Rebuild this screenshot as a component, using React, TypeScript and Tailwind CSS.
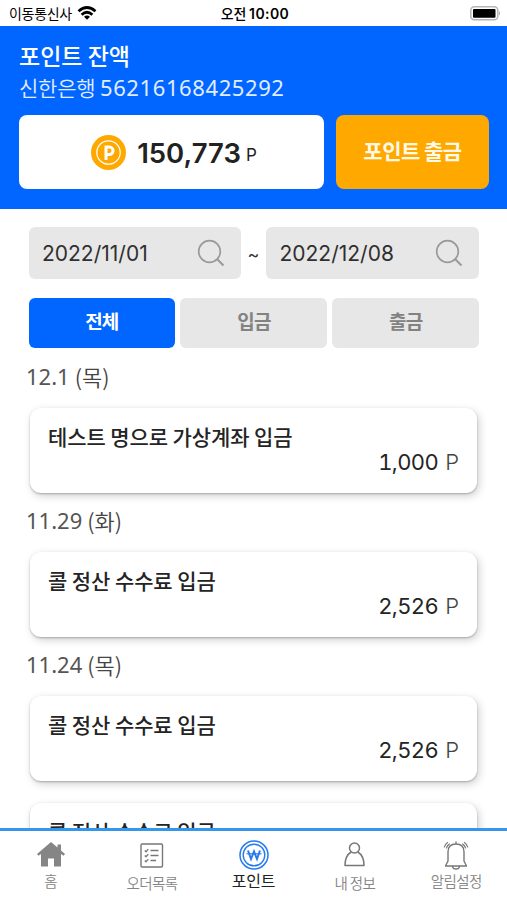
import type { ReactNode } from 'react';

const KR = "font-['Noto_Sans_CJK_KR',sans-serif]";
const LATIN = "font-['Inter','Noto_Sans_CJK_KR',sans-serif]";
const HUMANIST = "font-['Noto_Sans','Noto_Sans_CJK_KR',sans-serif]";

function StatusBar() {
  return (
    <header className={`${KR} grid h-[26px] shrink-0 grid-cols-3 items-center bg-white pr-[6px] pl-[9px] text-black`}>
      <div className="flex items-center gap-[5px]">
        <span className="text-[14px] leading-none tracking-[-0.3px]">이동통신사</span>
        <svg width="20" height="14" viewBox="0 0 20 14" fill="none" stroke="black" strokeWidth="2.7">
          <path d="M1.5 5.2 Q10 -2.2 18.5 5.2" />
          <path d="M4.6 8.7 Q10 3.8 15.4 8.7" />
          <path d="M7 10.7 Q10 8.2 13 10.7 L10 13.8Z" fill="black" stroke="none" />
        </svg>
      </div>
      <div className="text-center text-[14px] leading-none font-medium whitespace-nowrap">
        <span className="tracking-[-0.2px]">오전 </span>
        <span className="font-['Inter',sans-serif] text-[14px] font-semibold tracking-[0.4px]">10:00</span>
      </div>
      <svg className="justify-self-end" width="31" height="15" viewBox="0 0 31 15">
        <rect x="0.8" y="0.8" width="27" height="13" rx="3.5" fill="white" stroke="#b5b5b5" strokeWidth="1.5" />
        <rect x="3" y="3" width="22.5" height="8.8" rx="1" fill="black" />
        <path d="M29 5 Q31 7.3 29 9.8Z" fill="#aaa" />
      </svg>
    </header>
  );
}

function Balance() {
  return (
    <section className={`${KR} h-[183px] shrink-0 bg-[#0066ff] px-[19px] pt-[14px] text-white`}>
      <h1 className="h-[31px] text-[23px] leading-[31px] font-medium">포인트 잔액</h1>
      <p className="h-[32px] text-[21px] leading-[32px] font-[350] whitespace-nowrap text-[#e0edff]">
        <span className="tracking-[-0.2px]">신한은행 </span>
        <span className={`${HUMANIST} text-[22px] font-normal tracking-[0.6px]`}>56216168425292</span>
      </p>
      <div className="mt-3 grid h-[74px] grid-cols-[305px_153px] gap-3">
        <div className="flex items-center justify-center rounded-lg bg-white pl-[5px] text-[#222]">
          <svg width="35" height="35" viewBox="0 0 35 35">
            <circle cx="17.5" cy="17.5" r="17.5" fill="#ffa800" />
            <circle cx="17.5" cy="17.5" r="11.7" fill="none" stroke="white" strokeWidth="1.2" />
            <path d="M15 25 V12 H18.3 A3.7 3.7 0 0 1 18.3 19.5 H15" fill="none" stroke="white" strokeWidth="3" />
          </svg>
          <b className={`${LATIN} mt-[3px] ml-[11px] text-[27.5px] leading-none font-semibold`}>150,773</b>
          <span className={`${LATIN} mt-[6px] ml-[5px] text-[17px] leading-none`}>P</span>
        </div>
        <button className="rounded-lg bg-[#ffa800] pb-[4px] text-[21px] leading-none font-bold tracking-[-0.5px] text-[#fff9e8]">포인트 출금</button>
      </div>
    </section>
  );
}

function DateField({ value }: { value: string }) {
  return (
    <div className="flex h-[52px] items-center justify-between rounded-md bg-[#e7e7e7] pr-[16px] pl-[13.5px] text-[#303030]">
      <span className={`${LATIN} text-[21px] leading-none`}>{value}</span>
      <svg width="28" height="28" viewBox="0 0 28 28" fill="none" stroke="#999" strokeWidth="1.7">
        <circle cx="12.5" cy="12.5" r="10.8" />
        <path d="M20 20 L26.5 26.5" strokeWidth="2" />
      </svg>
    </div>
  );
}

function Filters() {
  return (
    <div className={`${KR} px-[28.5px] pt-[18px]`}>
      <div className="grid grid-cols-[212.5px_25px_212.5px]">
        <DateField value="2022/11/01" />
        <span className={`${LATIN} self-center pt-1 text-center text-[18px] leading-none text-[#333]`}>~</span>
        <DateField value="2022/12/08" />
      </div>
      <div className="mt-[19px] grid h-[50px] grid-cols-3 gap-[5px] text-[19px] leading-none font-bold tracking-[-0.8px]">
        <button className="rounded-md bg-[#0066ff] pb-[5px] text-white">전체</button>
        <button className="rounded-md bg-[#e7e7e7] pb-[5px] pl-px text-[#828282]">입금</button>
        <button className="rounded-md bg-[#e7e7e7] pb-[5px] pl-px text-[#828282]">출금</button>
      </div>
    </div>
  );
}

function Card({ title, amount }: { title: string; amount?: string }) {
  return (
    <div className="mx-[30px] h-[85px] shrink-0 rounded-[11px] bg-white px-[18px] pt-[13px] text-[#242424] shadow-[2px_3px_9px_rgba(0,0,0,0.19),0_1px_2px_rgba(0,0,0,0.24)]">
      <div className="h-[30px] text-[21px] leading-[30px] font-medium tracking-[-0.1px]">{title}</div>
      {amount && (
        <div className={`${LATIN} mt-[-2px] flex h-[26px] justify-end gap-[7px] text-[22px] leading-[26px]`}>
          <span className="tracking-[-0.6px] tabular-nums">{amount}</span>
          <span className="font-light text-[#444]">P</span>
        </div>
      )}
    </div>
  );
}

function Entry({ date, day, title, amount }: { date: string; day: string; title: string; amount: string }) {
  return (
    <section className="flex h-[144px] shrink-0 flex-col">
      <h2 className="flex h-[60px] shrink-0 gap-[5px] pl-[26px] text-[22px] leading-[56px] font-[350] text-[#444]">
        <span className={`${HUMANIST} font-normal text-[#555]`}>{date}</span>
        <span>({day})</span>
      </h2>
      <Card title={title} amount={amount} />
    </section>
  );
}

function NavItem({ label, active, raised, children }: { label: string; active?: boolean; raised?: boolean; children: ReactNode }) {
  return (
    <div className={active ? 'flex flex-col items-center text-[#222]' : 'flex flex-col items-center text-[#858585]'}>
      <div className="flex h-[39px] items-end justify-center">{children}</div>
      <span
        className={
          active
            ? 'text-[16px] leading-[21px] tracking-[-0.2px]'
            : raised
              ? 'text-[14.5px] leading-[21px] font-[350] tracking-[-0.6px]'
              : 'text-[14.5px] leading-[25px] font-[350] tracking-[-0.6px]'
        }
      >
        {label}
      </span>
    </div>
  );
}

function Navigation() {
  return (
    <nav className={`${KR} grid h-[72px] shrink-0 grid-cols-5 border-t-[3px] border-[#3497ea] bg-white`}>
      <NavItem label="홈" raised>
        <svg className="mb-[3px]" width="28" height="25" viewBox="0 0 28 25" fill="#858585">
          <path d="M14 0 L0 12 L1.4 13.7 L4 12 V24.5 H11 V16.5 H17 V24.5 H24 V12 L26.6 13.7 L28 12 L24 8.5 V2.5 H20.5 V5.6Z" />
        </svg>
      </NavItem>
      <NavItem label="오더목록">
        <svg className="mb-[2px]" width="24" height="25" viewBox="0 0 24 25" fill="none" stroke="#777" strokeWidth="1.4">
          <rect x="1" y="1" width="21.5" height="23" rx="1.2" />
          <path d="M4.8 7.5 L6 8.7 L8.3 6.1 M4.8 12.5 L6 13.7 L8.3 11.1 M4.8 17.5 L6 18.7 L8.3 16.1 M10.5 7.5 H18.5 M10.5 12.5 H18.5 M10.5 17.5 H16" strokeWidth="1.3" />
        </svg>
      </NavItem>
      <NavItem label="포인트" active>
        <svg className="ml-px" width="30" height="30" viewBox="0 0 30 30" fill="none" stroke="#267bed">
          <circle cx="15" cy="15" r="14" strokeWidth="1.5" />
          <circle cx="15" cy="15" r="10.8" strokeWidth="1.4" />
          <path d="M9 10.5 L12 19 L15 11.5 L18 19 L21 10.5" strokeWidth="2" />
          <path d="M7.5 13.8 H22.5" strokeWidth="1.1" />
        </svg>
      </NavItem>
      <NavItem label="내 정보">
        <svg className="mb-[3px]" width="21" height="25" viewBox="0 0 21 25" fill="none" stroke="#777" strokeWidth="1.5">
          <circle cx="10.5" cy="6" r="5" />
          <path d="M7.2 10 C3.8 12 1 16.5 1 23.6 H20 C20 16.5 17.2 12 13.8 10" strokeLinejoin="round" />
        </svg>
      </NavItem>
      <NavItem label="알림설정" raised>
        <svg width="26" height="29" viewBox="0 0 26 29" fill="none" stroke="#777" strokeLinecap="round" strokeLinejoin="round">
          <path d="M5 20 V11 C5 6 8 3 13 3 S21 6 21 11 V20 L23.5 25 H2.5 Z M13 1 V3 M9.5 25 C9.5 29 16.5 29 16.5 25" strokeWidth="1.4" />
          <path d="M4.6 1.5 Q2.4 3 1.3 6 M6.4 3 Q4.3 4.5 3.4 7 M21.4 1.5 Q23.6 3 24.7 6 M19.6 3 Q21.7 4.5 22.6 7" strokeWidth="1.1" />
        </svg>
      </NavItem>
    </nav>
  );
}

export default function App() {
  return (
    <div className="flex h-[900px] w-[507px] flex-col overflow-hidden bg-white">
      <StatusBar />
      <Balance />
      <Filters />
      <main className={`${KR} flex min-h-0 flex-1 flex-col overflow-hidden`}>
        <Entry date="12.1" day="목" title="테스트 명으로 가상계좌 입금" amount="1,000" />
        <Entry date="11.29" day="화" title="콜 정산 수수료 입금" amount="2,526" />
        <Entry date="11.24" day="목" title="콜 정산 수수료 입금" amount="2,526" />
        <div className="mt-[23px] shrink-0">
          <Card title="콜 정산 수수료 입금" />
        </div>
      </main>
      <Navigation />
    </div>
  );
}
